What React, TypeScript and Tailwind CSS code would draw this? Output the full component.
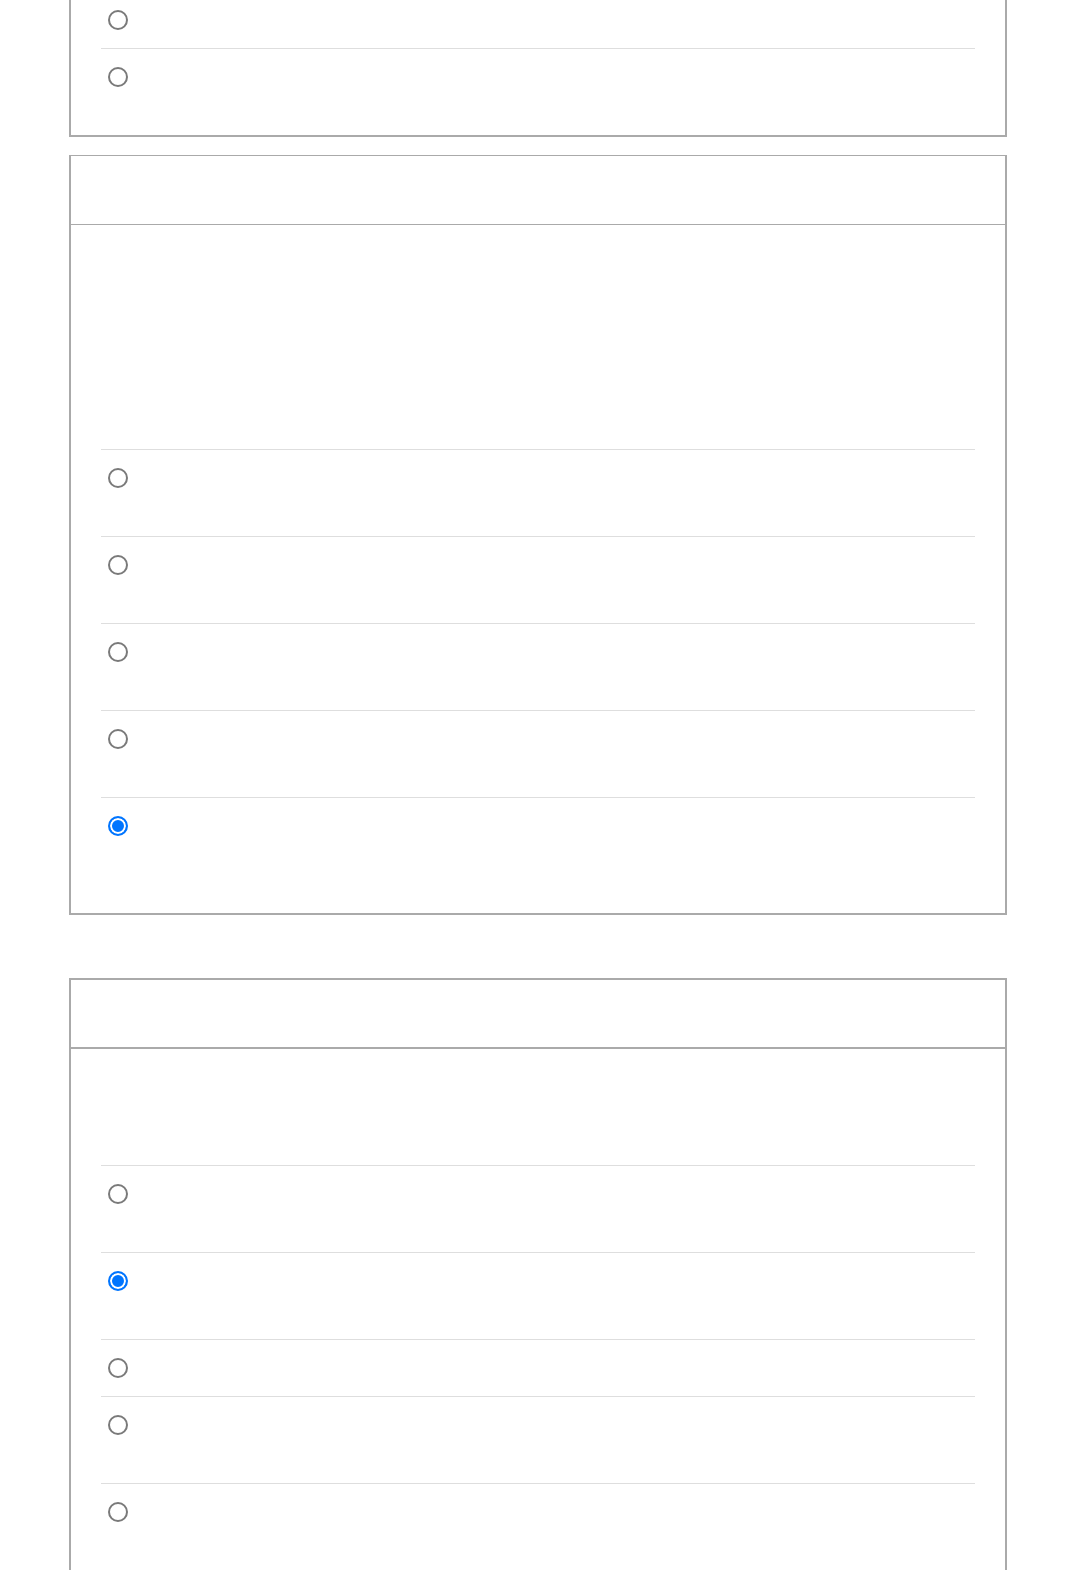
import React from "react";

type Row = { tall: boolean; checked?: boolean };

const radioCls =
  "appearance-none ml-[7px] w-5 h-5 shrink-0 rounded-full bg-white border-2 border-[#7a7a7a] checked:border-2 checked:border-[#0075ff] checked:bg-[#0075ff] checked:shadow-[inset_0_0_0_2px_#ffffff]";

function OptionRow({ row, name }: { row: Row; name: string }) {
  return (
    <div
      className={
        "border-t border-[#dedede] " +
        (row.tall ? "h-[87px] " : "h-[57px] ") +
        "pt-[18px] flex items-start"
      }
    >
      <input
        type="radio"
        name={name}
        defaultChecked={!!row.checked}
        className={radioCls}
        aria-label="option"
      />
    </div>
  );
}

export default function App() {
  const card2: Row[] = [
    { tall: true },
    { tall: true },
    { tall: true },
    { tall: true },
    { tall: true, checked: true },
  ];
  const card3: Row[] = [
    { tall: true },
    { tall: true, checked: true },
    { tall: false },
    { tall: true },
    { tall: true },
  ];
  return (
    <div className="bg-white min-h-screen font-['Liberation_Sans',Arial,sans-serif]">
      <div className="w-[938px] mx-auto pb-10">
        {/* Card 1 (scrolled, top cut) */}
        <div className="border-x-2 border-b-2 border-[#aaa] px-[30px] pb-[30px]">
          <div className="h-[48px] pt-[10px] flex items-start">
            <input type="radio" name="g1" className={radioCls} aria-label="option" />
          </div>
          <OptionRow row={{ tall: false }} name="g1" />
        </div>

        {/* Card 2 */}
        <div className="mt-[18px] border-x-2 border-t border-b-2 border-[#aaa]">
          <div className="h-[69px] border-b border-[#aaa]" />
          <div className="px-[30px] pb-[29px]">
            <div className="h-[224px]" />
            {card2.map((r, i) => (
              <OptionRow key={i} row={r} name="g2" />
            ))}
          </div>
        </div>

        {/* Card 3 */}
        <div className="mt-[63px] border-2 border-[#aaa]">
          <div className="h-[69px] border-b-2 border-[#aaa]" />
          <div className="px-[30px] pb-[30px]">
            <div className="h-[116px]" />
            {card3.map((r, i) => (
              <OptionRow key={i} row={r} name="g3" />
            ))}
          </div>
        </div>
      </div>
    </div>
  );
}
